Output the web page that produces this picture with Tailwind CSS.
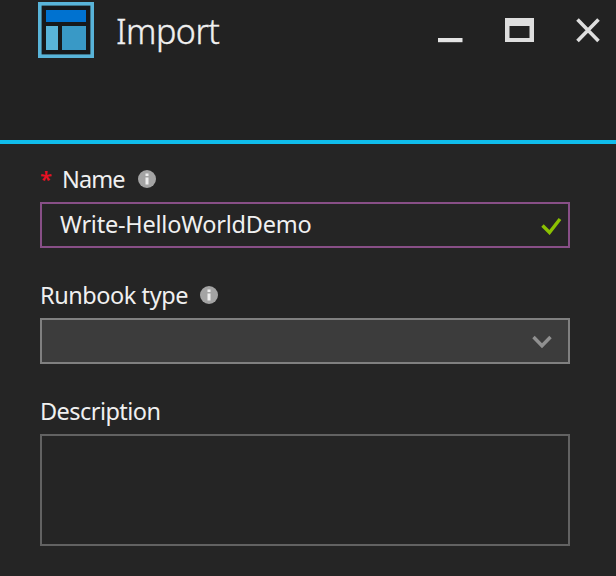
<!DOCTYPE html>
<html lang="en">
<head>
<meta charset="utf-8">
<title>Import</title>
<script src="https://cdn.jsdelivr.net/npm/@tailwindcss/browser@4"></script>
</head>
<body class="h-[576px] w-[616px] overflow-hidden bg-[#252525] font-['Noto_Sans','Open_Sans',sans-serif] text-[#f0f0f0]">
<header class="flex h-[140px] items-start bg-[#222222] pl-[38px]">
  <svg class="mt-[2px] h-14 w-14 shrink-0" viewBox="0 0 56 56">
    <rect x="1.8" y="1.8" width="52.4" height="52.4" fill="#17191b" stroke="#59b4d9" stroke-width="3.6"/>
    <path fill="#0072d0" d="M8 8h40v12H8z"/>
    <path fill="#59b4d9" d="M8 24h12v24H8z"/>
    <path fill="#3999c6" d="M24 24h24v24H24z"/>
  </svg>
  <h1 class="ml-[22px] mt-[7px] w-[320px] text-[34px] font-light leading-[48px] tracking-[-0.5px] [-webkit-text-stroke:0.4px_#f0f0f0]">Import</h1>
  <div class="flex pt-[17px]">
    <svg class="h-[27px] w-[28px]" viewBox="436 17 28 27"><path fill="#e4e4e4" d="M438 38h24.500v4.200H438z"/></svg>
    <svg class="ml-[40px] h-[27px] w-[30px]" viewBox="504 17 30 27"><path fill="#dedede" fill-rule="evenodd" d="M505 18h29v24h-29zM509.500 26v12h20V26z"/></svg>
    <svg class="ml-[41px] h-[27px] w-[27px]" viewBox="575 17 27 27"><path fill="none" stroke="#dedede" stroke-width="3.6" d="M577.500 19.500 598.500 41M598.500 19.500 577.500 41"/></svg>
  </div>
</header>
<div class="h-1 bg-[#10bdec]"></div>
<main class="pl-[40px]">
  <div class="flex h-[58px] items-start pt-[18px]">
    <span class="w-[22px] text-[22px] font-semibold leading-[32px] text-[#e81123]">*</span>
    <label for="name" class="w-[63px] text-[23.500px] leading-[34px] tracking-[-0.9px]">Name</label>
    <svg class="ml-[13px] mt-[8px] h-[18px] w-[18px]" viewBox="0 0 18 18"><circle cx="9" cy="9" r="9" fill="#a4a4a4"/><path fill="#eeeeee" d="M7.500 3.500h3v2.500h-3zM7.500 7.500h3v7h-3z"/></svg>
  </div>
  <div class="flex h-[46px] w-[530px] items-center border-2 border-[#884f87] pl-[18px] pr-[6px]">
    <span id="name" class="-mt-[3px] grow text-[23.500px] leading-[34px] tracking-[-0.23px]">Write-HelloWorldDemo</span>
    <svg class="mt-[1px] h-[18px] w-[21px]" viewBox="541 217 21 18"><path fill="none" stroke="#8bc102" stroke-width="3.4" d="m542.500 225.500 7 7 10.500-13.500"/></svg>
  </div>
  <div class="flex h-[70px] items-start pt-[30px]">
    <label class="w-[148px] text-[23.500px] leading-[34px] tracking-[-0.45px]">Runbook type</label>
    <svg class="ml-[12px] mt-[8px] h-[18px] w-[18px]" viewBox="0 0 18 18"><circle cx="9" cy="9" r="9" fill="#a4a4a4"/><path fill="#eeeeee" d="M7.500 3.500h3v2.500h-3zM7.500 7.500h3v7h-3z"/></svg>
  </div>
  <div class="flex h-[46px] w-[530px] items-center justify-end border-2 border-[#808080] bg-[#3c3c3c] pr-[16px]">
    <svg class="mt-px h-[14px] w-[20px]" viewBox="532 335 20 14"><path fill="none" stroke="#909090" stroke-width="3.4" d="m533.500 337 8.500 8.800 8.500-8.800"/></svg>
  </div>
  <div class="h-[70px] pt-[30px]">
    <span class="block text-[23.500px] leading-[34px] tracking-[-0.55px]">Description</span>
  </div>
  <div class="h-[112px] w-[530px] border-2 border-[#626262]"></div>
</main>
</body>
</html>
